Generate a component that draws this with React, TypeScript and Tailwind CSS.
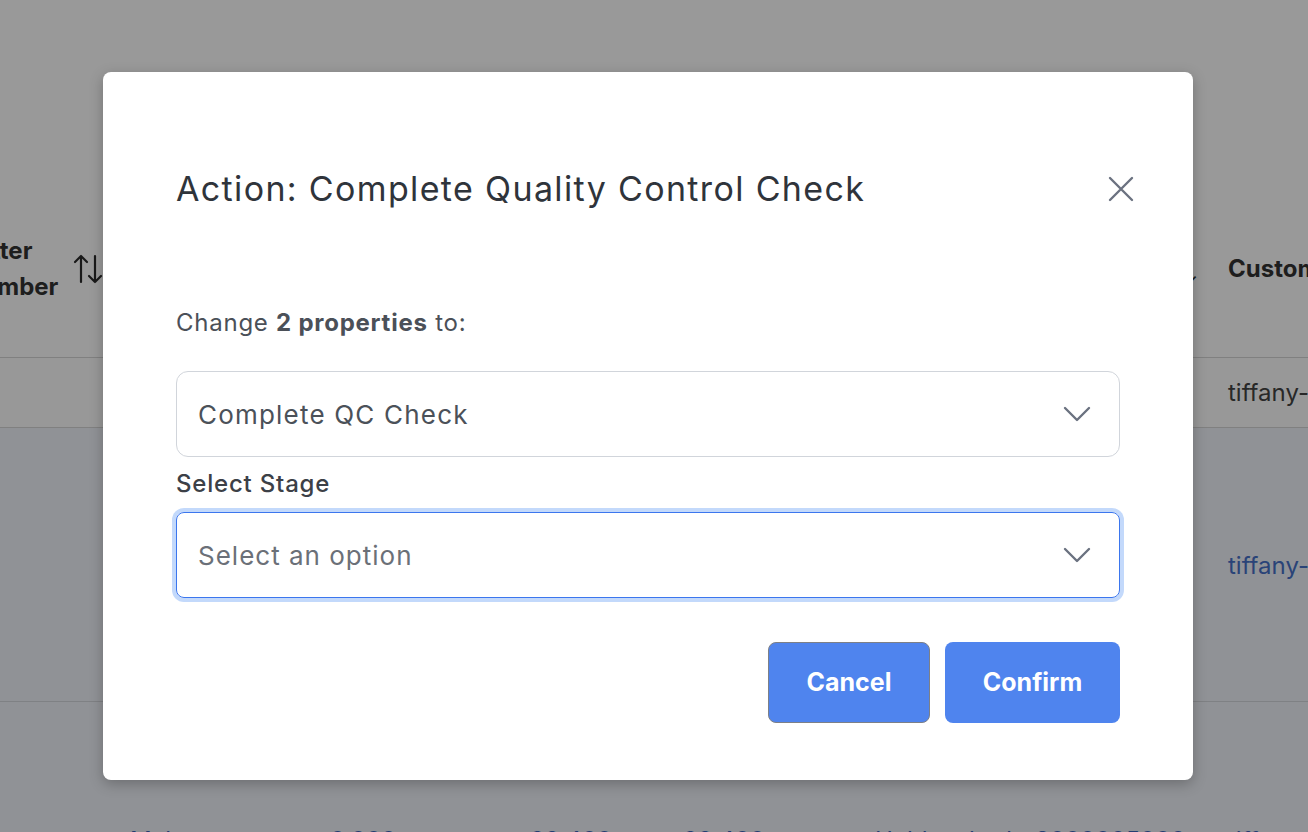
import React from "react";

const cols = "grid grid-cols-[130px_200px_200px_153px_192px_160px_193px_1fr]";

function SortIcon() {
  return (
    <svg width="30" height="32" viewBox="0 0 30 32" fill="none" stroke="#2b2b2b" strokeWidth="2.2" strokeLinecap="round" strokeLinejoin="round">
      <path d="M8 29V3M2 9l6-6 6 6" />
      <path d="M22 3v26M16 23l6 6 6-6" />
    </svg>
  );
}

function Chevron() {
  return (
    <svg width="28" height="16" viewBox="0 0 28 16" fill="none" stroke="#6b7280" strokeWidth="2.4" strokeLinecap="round" strokeLinejoin="round">
      <path d="M2 2l12 12L26 2" />
    </svg>
  );
}

function CloseIcon() {
  return (
    <svg width="26" height="26" viewBox="0 0 26 26" fill="none" stroke="#6b7280" strokeWidth="2.4" strokeLinecap="round">
      <path d="M2 2l22 22M24 2L2 24" />
    </svg>
  );
}

export default function App() {
  return (
    <div className="relative h-[832px] w-[1308px] overflow-hidden bg-white font-['Inter','Liberation_Sans',sans-serif]">
      {/* Table behind the dialog */}
      <div className="flex flex-col">
        <div className={`${cols} h-[358px] items-center border-b border-[#d6d6d6] pt-[184px] pb-[4px]`}>
          <div className="flex items-center gap-[15px]">
            <div className="-ml-[36px] flex flex-col items-start text-[24px] font-bold leading-[36px] text-[#333]">
              <span className="whitespace-nowrap">Letter</span>
              <span className="whitespace-nowrap">Number</span>
            </div>
            <SortIcon />
          </div>
          <div />
          <div />
          <div />
          <div />
          <div />
          <div className="flex justify-end pr-[30px] pt-[14px] text-[20px] text-[#333]">⌄</div>
          <div className="whitespace-nowrap text-[24px] font-bold text-[#333]">Customer</div>
        </div>
        <div className={`${cols} h-[70px] items-center border-b border-[#d6d6d6] bg-[#fefefd]`}>
          <div />
          <div />
          <div />
          <div />
          <div />
          <div />
          <div />
          <div className="whitespace-nowrap text-[24px] text-[#444]">tiffany-lee</div>
        </div>
        <div className={`${cols} h-[274px] items-center border-b border-[#d4d8dd] bg-[#f0f4fa]`}>
          <div />
          <div />
          <div />
          <div />
          <div />
          <div />
          <div />
          <div className="pt-[2px] whitespace-nowrap text-[24px] text-[#4671c8]">tiffany-lee</div>
        </div>
        <div className={`${cols} h-[200px] bg-[#f0f4fa] pt-[123px] text-[24px] leading-[32px] text-[#3f67bd]`}>
          <div />
          <div>Makers</div>
          <div>0.000</div>
          <div>22.400</div>
          <div>22.400</div>
          <div>Unbleached</div>
          <div>3000005000</div>
          <div className="whitespace-nowrap">tiffany-lee</div>
        </div>
      </div>

      {/* Overlay + dialog */}
      <div className="absolute inset-0 bg-black/40">
        <div className="ml-[103px] mt-[72px] w-[1090px] rounded-[8px] bg-white px-[73px] pt-[97px] pb-[57px] shadow-[0_4px_14px_rgba(0,0,0,0.25)]">
          <div className="flex items-center justify-between">
            <h2 className="whitespace-nowrap text-[34px] leading-[40px] tracking-[1.35px] text-[#2f343b]">
              Action: Complete Quality Control Check
            </h2>
            <button className="-mr-[21px] flex h-[40px] w-[40px] items-center justify-center">
              <CloseIcon />
            </button>
          </div>

          <p className="mt-[98px] text-[24px] leading-[32px] tracking-[0.75px] text-[#4b5058]">
            Change <span className="font-bold">2 properties</span> to:
          </p>

          <div className="mt-[32px] flex h-[86px] items-center justify-between rounded-[12px] border border-[#d1d5db] pl-[21px] pr-[28px]">
            <span className="text-[26px] tracking-[1.2px] text-[#4b5159]">Complete QC Check</span>
            <Chevron />
          </div>

          <label className="mt-[11px] block text-[24px] font-medium leading-[32px] tracking-[0.8px] text-[#3c4047]">
            Select Stage
          </label>

          <div className="mt-[12px] flex h-[86px] items-center justify-between rounded-[8px] border border-[#3b76ee] pl-[21px] pr-[28px] ring-4 ring-[#c3d9fb]">
            <span className="text-[26px] tracking-[1px] text-[#6b7078]">Select an option</span>
            <Chevron />
          </div>

          <div className="mt-[44px] flex justify-end gap-[15px]">
            <button className="h-[81px] w-[162px] rounded-[8px] border border-[#7d8087] bg-[#4f84ee] text-[25px] font-bold text-white">
              Cancel
            </button>
            <button className="h-[81px] w-[175px] rounded-[8px] bg-[#4f84ee] text-[25px] font-bold text-white">
              Confirm
            </button>
          </div>
        </div>
      </div>
    </div>
  );
}
